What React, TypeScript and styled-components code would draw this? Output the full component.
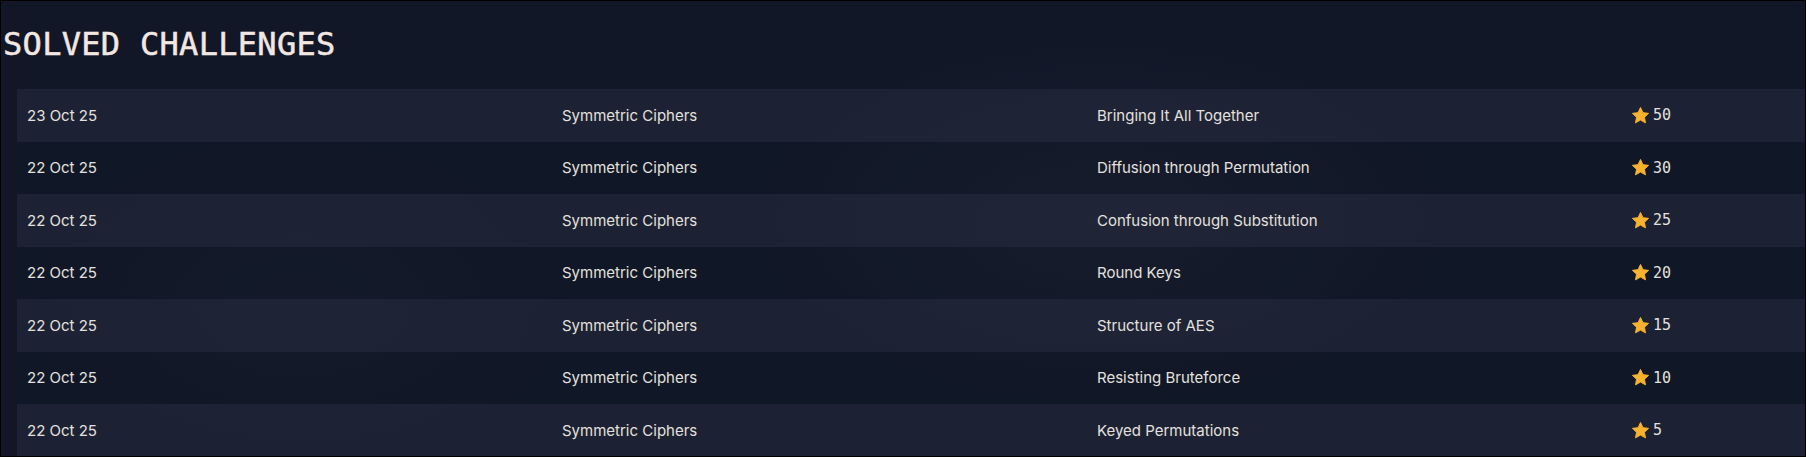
import React from 'react'
import styled, { createGlobalStyle } from 'styled-components'

const GlobalStyle = createGlobalStyle`
  html, body {
    margin: 0;
    padding: 0;
    background: #111726;
  }
`

const Page = styled.div`
  box-sizing: border-box;
  width: 1806px;
  height: 457px;
  overflow: hidden;
  border: 1px solid #000;
  background:
    radial-gradient(ellipse 500px 260px at 1100px 220px, rgba(40, 46, 64, 0.35), rgba(40, 46, 64, 0) 70%),
    radial-gradient(ellipse 400px 240px at 300px 300px, rgba(30, 36, 52, 0.3), rgba(30, 36, 52, 0) 70%),
    #111727;
  font-family: Inter, 'Noto Sans', sans-serif;
`

const Title = styled.h2`
  margin: 0;
  padding: 23px 0 0 2px;
  height: 88px;
  box-sizing: border-box;
  font-family: 'DejaVu Sans Mono', monospace;
  font-size: 32px;
  font-weight: 400;
  line-height: 40px;
  letter-spacing: 0.3px;
  color: #f3e7e1;
  -webkit-text-stroke: 0.5px #f3e7e1;
`

const Table = styled.div`
  margin-left: 16px;
  display: flex;
  flex-direction: column;
`

const Row = styled.div<{ $shade: boolean }>`
  display: grid;
  grid-template-columns: 535px 535px 535px 1fr;
  align-items: center;
  height: 52.5px;
  background: ${(p) => (p.$shade ? 'rgba(38, 44, 62, 0.55)' : 'rgba(16, 22, 36, 0.3)')};
`

const Cell = styled.div`
  padding: 0 10px;
  font-size: 15px;
  color: #e4e0df;
  white-space: nowrap;
`

const Points = styled.div`
  padding: 0 10px 0 9px;
  display: flex;
  align-items: center;
  gap: 3px;
  font-family: 'DejaVu Sans Mono', monospace;
  font-size: 15px;
  color: #e4e0df;
`

const StarIcon = () => (
  <svg width="19" height="19" viewBox="0 0 24 24" aria-hidden="true">
    <path
      d="M12 1.8l3.1 6.6 7.1.9-5.2 4.9 1.3 7.1L12 17.8l-6.3 3.5 1.3-7.1-5.2-4.9 7.1-.9z"
      fill="#f8b22e"
      stroke="#f8b22e"
      strokeWidth="1.2"
      strokeLinejoin="round"
    />
  </svg>
)

const solved = [
  { date: '23 Oct 25', category: 'Symmetric Ciphers', name: 'Bringing It All Together', points: 50 },
  { date: '22 Oct 25', category: 'Symmetric Ciphers', name: 'Diffusion through Permutation', points: 30 },
  { date: '22 Oct 25', category: 'Symmetric Ciphers', name: 'Confusion through Substitution', points: 25 },
  { date: '22 Oct 25', category: 'Symmetric Ciphers', name: 'Round Keys', points: 20 },
  { date: '22 Oct 25', category: 'Symmetric Ciphers', name: 'Structure of AES', points: 15 },
  { date: '22 Oct 25', category: 'Symmetric Ciphers', name: 'Resisting Bruteforce', points: 10 },
  { date: '22 Oct 25', category: 'Symmetric Ciphers', name: 'Keyed Permutations', points: 5 },
]

export default function App() {
  return (
    <Page>
      <GlobalStyle />
      <Title>SOLVED CHALLENGES</Title>
      <Table>
        {solved.map((c, i) => (
          <Row key={c.name} $shade={i % 2 === 0}>
            <Cell>{c.date}</Cell>
            <Cell>{c.category}</Cell>
            <Cell>{c.name}</Cell>
            <Points>
              <StarIcon />
              {c.points}
            </Points>
          </Row>
        ))}
      </Table>
    </Page>
  )
}
